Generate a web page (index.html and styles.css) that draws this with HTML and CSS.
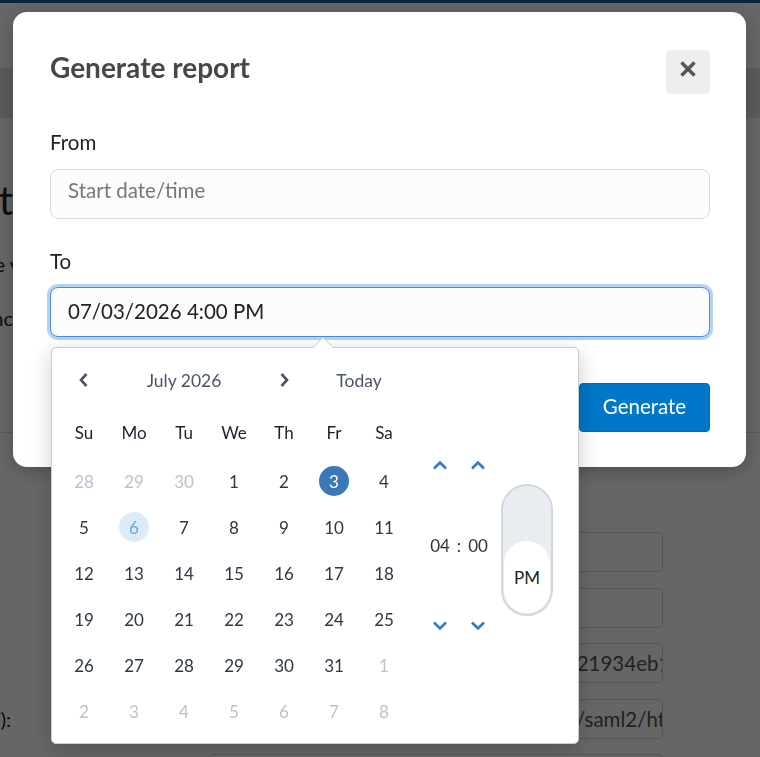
FILE: index.html
```html
<!DOCTYPE html>
<html lang="en">
<head>
    <meta charset="UTF-8">
    <meta name="viewport" content="width=device-width, initial-scale=1.0">
    <title>Generate report</title>
    <link rel="stylesheet" href="styles.css">
</head>
<body>

    <!-- page behind the dialog -->
    <div class="page">
        <div class="topbar"></div>
        <div class="header"></div>
        <div class="subnav"></div>

        <div class="intro">
            <h1 class="lead lead-title"><span>Edit client</span></h1>
            <p class="lead lead-text lead-wide"><span>Edit the v</span></p>
            <p class="lead lead-text"><span>Metadata sync</span></p>
        </div>
        <hr class="rule">

        <div class="fields">
            <div class="field-row"><label class="row-label"></label><div class="row-input"></div></div>
            <div class="field-row"><label class="row-label"></label><div class="row-input"></div></div>
            <div class="field-row"><label class="row-label"></label><div class="row-input"><span>83071562904817325064918273650421934eb1c07f</span></div></div>
            <div class="field-row"><label class="row-label"><span>Assertion consumer URL (POST):</span></label><div class="row-input"><span>https://signin.partners-university.edu.au/saml2/http-post</span></div></div>
            <div class="field-row"><label class="row-label"></label><div class="row-input"></div></div>
        </div>
    </div>

    <!-- dialog -->
    <div class="backdrop">
        <div class="modal">
            <div class="modal-head">
                <h2 class="modal-title">Generate report</h2>
                <button class="close" aria-label="Close">
                    <svg width="18" height="18" viewBox="0 0 18 18"><path d="M2.5 2.5 L15.5 15.5 M15.5 2.5 L2.5 15.5" stroke="#555" stroke-width="3.4" stroke-linecap="butt"/></svg>
                </button>
            </div>

            <label class="field-label">From</label>
            <div class="input placeholder">Start date/time</div>

            <label class="field-label field-label-to">To</label>
            <div class="input-wrap">
                <div class="input input-focus">07/03/2026 4:00 PM</div>

                <div class="picker">
                    <div class="calendar">
                        <div class="cal-head">
                            <span class="nav prev">
                                <svg width="12" height="16" viewBox="0 0 12 16"><polyline points="8.5,2 3,8 8.5,14" fill="none" stroke="#4a5568" stroke-width="2.6"/></svg>
                            </span>
                            <span class="month">July 2026</span>
                            <span class="nav next">
                                <svg width="12" height="16" viewBox="0 0 12 16"><polyline points="3.5,2 9,8 3.5,14" fill="none" stroke="#4a5568" stroke-width="2.6"/></svg>
                            </span>
                            <span class="today">Today</span>
                        </div>
                        <div class="weekdays">
                            <span>Su</span><span>Mo</span><span>Tu</span><span>We</span><span>Th</span><span>Fr</span><span>Sa</span>
                        </div>
                        <div class="days">
                            <div class="day muted"><span>28</span></div>
                            <div class="day muted"><span>29</span></div>
                            <div class="day muted"><span>30</span></div>
                            <div class="day"><span>1</span></div>
                            <div class="day"><span>2</span></div>
                            <div class="day selected"><span>3</span></div>
                            <div class="day"><span>4</span></div>

                            <div class="day"><span>5</span></div>
                            <div class="day current"><span>6</span></div>
                            <div class="day"><span>7</span></div>
                            <div class="day"><span>8</span></div>
                            <div class="day"><span>9</span></div>
                            <div class="day"><span>10</span></div>
                            <div class="day"><span>11</span></div>

                            <div class="day"><span>12</span></div>
                            <div class="day"><span>13</span></div>
                            <div class="day"><span>14</span></div>
                            <div class="day"><span>15</span></div>
                            <div class="day"><span>16</span></div>
                            <div class="day"><span>17</span></div>
                            <div class="day"><span>18</span></div>

                            <div class="day"><span>19</span></div>
                            <div class="day"><span>20</span></div>
                            <div class="day"><span>21</span></div>
                            <div class="day"><span>22</span></div>
                            <div class="day"><span>23</span></div>
                            <div class="day"><span>24</span></div>
                            <div class="day"><span>25</span></div>

                            <div class="day"><span>26</span></div>
                            <div class="day"><span>27</span></div>
                            <div class="day"><span>28</span></div>
                            <div class="day"><span>29</span></div>
                            <div class="day"><span>30</span></div>
                            <div class="day"><span>31</span></div>
                            <div class="day muted"><span>1</span></div>

                            <div class="day muted"><span>2</span></div>
                            <div class="day muted"><span>3</span></div>
                            <div class="day muted"><span>4</span></div>
                            <div class="day muted"><span>5</span></div>
                            <div class="day muted"><span>6</span></div>
                            <div class="day muted"><span>7</span></div>
                            <div class="day muted"><span>8</span></div>
                        </div>
                    </div>

                    <div class="time">
                        <div class="clock">
                            <span class="arrow up-h"><svg width="16" height="10" viewBox="0 0 16 10"><polyline points="2,8.5 8,2.5 14,8.5" fill="none" stroke="#2f7bcb" stroke-width="2.6"/></svg></span>
                            <span class="arrow up-m"><svg width="16" height="10" viewBox="0 0 16 10"><polyline points="2,8.5 8,2.5 14,8.5" fill="none" stroke="#2f7bcb" stroke-width="2.6"/></svg></span>
                            <span class="value hours">04</span>
                            <span class="value colon">:</span>
                            <span class="value minutes">00</span>
                            <span class="arrow down-h"><svg width="16" height="10" viewBox="0 0 16 10"><polyline points="2,1.5 8,7.5 14,1.5" fill="none" stroke="#2f7bcb" stroke-width="2.6"/></svg></span>
                            <span class="arrow down-m"><svg width="16" height="10" viewBox="0 0 16 10"><polyline points="2,1.5 8,7.5 14,1.5" fill="none" stroke="#2f7bcb" stroke-width="2.6"/></svg></span>
                        </div>
                        <div class="meridiem">
                            <div class="knob">PM</div>
                        </div>
                    </div>
                </div>
            </div>

            <div class="modal-foot">
                <button class="btn">Generate</button>
            </div>
        </div>
    </div>

</body>
</html>
```

FILE: styles.css
```css
* {
    box-sizing: border-box;
}
html, body {
    height: 100%;
}
body {
    margin: 0;
    font-family: Lato, "Noto Sans", sans-serif;
    background-color: white;
    color: #222;
    overflow: hidden;
}

/* background page */
.topbar {
    height: 3px;
    background-color: #1c5ca0;
}
.header {
    height: 65px;
}
.subnav {
    height: 50px;
    background-color: #e4e4e4;
}
.intro {
    padding-top: 58px;
}
.lead {
    display: flex;
    justify-content: flex-end;
    width: 13px;
    overflow: hidden;
    white-space: nowrap;
    margin: 0;
}
.lead-title {
    font-size: 40px;
    line-height: 48px;
    font-weight: normal;
}
.lead-text {
    font-size: 20px;
    line-height: 28px;
    margin-top: 26px;
}
.lead-wide {
    width: 20px;
}
.rule {
    margin: 100px 0 0;
    border: none;
    border-top: 1px solid #d8d8d8;
}
.fields {
    padding-top: 99px;
}
.field-row {
    display: grid;
    grid-template-columns: 11px 455px;
    column-gap: 197px;
    align-items: center;
    margin-bottom: 15.5px;
}
.row-label {
    display: flex;
    justify-content: flex-end;
    overflow: hidden;
    white-space: nowrap;
    font-size: 20px;
}
.row-input {
    height: 40px;
    border: 1px solid #d4d4d4;
    border-radius: 5px;
    padding-left: 11px;
    display: flex;
    align-items: center;
    overflow: hidden;
    white-space: nowrap;
    font-size: 20.5px;
    color: #555;
}

/* dialog */
.backdrop {
    position: fixed;
    inset: 0;
    background-color: rgba(0, 0, 0, 0.6);
    display: flex;
    align-items: flex-start;
    padding: 12px 0 0 13px;
}
.modal {
    width: 733px;
    background-color: white;
    border-radius: 14px;
    padding: 38px 36px 35px 37px;
    box-shadow: 0 4px 18px rgba(0, 0, 0, 0.25);
}
.modal-head {
    display: flex;
    justify-content: space-between;
    align-items: flex-start;
    height: 44px;
}
.modal-title {
    margin: 0;
    font-size: 28px;
    line-height: 34px;
    font-weight: bold;
    color: #474747;
}
.close {
    width: 44px;
    height: 44px;
    padding: 0 0 7px;
    border: none;
    border-radius: 4px;
    background-color: #eee;
    display: flex;
    align-items: center;
    justify-content: center;
}
.field-label {
    display: block;
    font-size: 20.5px;
    line-height: 24px;
    margin: 36px 0 15px;
}
.field-label-to {
    margin-top: 30px;
    margin-bottom: 14px;
}
.input {
    height: 50px;
    border: 1px solid #ddd;
    border-radius: 8px;
    background-color: #fcfcfc;
    padding: 0 17px 3px;
    display: flex;
    align-items: center;
    font-size: 20.5px;
}
.placeholder {
    padding-bottom: 9px;
    color: #777;
}
.input-wrap {
    position: relative;
}
.input-focus {
    border-color: #4a8fd8;
    box-shadow: 0 0 0 3px #b5d4f4;
    color: #222;
}
.modal-foot {
    display: flex;
    justify-content: flex-end;
    margin-top: 46px;
}
.btn {
    width: 131px;
    height: 49px;
    padding: 0 0 3px;
    border: 1px solid #006bb6;
    border-radius: 4px;
    background-color: #0077c8;
    color: white;
    font-family: inherit;
    font-size: 20.5px;
}

/* date picker */
.picker {
    position: absolute;
    top: calc(100% + 10px);
    left: 1px;
    width: 528px;
    display: flex;
    padding: 9px 0 9px 7px;
    background-color: white;
    border: 1px solid #ccc;
    border-radius: 5px;
    box-shadow: 0 6px 22px rgba(0, 0, 0, 0.2);
    z-index: 2;
}
.picker::before,
.picker::after {
    content: "";
    position: absolute;
    left: 261px;
    border: 10px solid transparent;
    border-top: none;
}
.picker::before {
    top: -11px;
    border-bottom: 10px solid #ccc;
}
.picker::after {
    top: -10px;
    border-bottom: 10px solid white;
}
.calendar {
    width: 350px;
}
.cal-head,
.weekdays,
.days {
    display: grid;
    grid-template-columns: repeat(7, 50px);
    grid-auto-rows: 46px;
    align-items: center;
    text-align: center;
    font-size: 17px;
}
.cal-head {
    color: #4a5568;
    font-size: 17.5px;
}
.nav {
    display: flex;
    justify-content: center;
}
.month {
    grid-column: 2 / 5;
}
.next {
    grid-column: 5;
}
.today {
    grid-column: 6 / 8;
}
.weekdays {
    margin-top: 6px;
    color: #1a202c;
}
.days {
    margin-top: 3px;
    color: #2d3748;
}
.day {
    display: flex;
    justify-content: center;
}
.day span {
    width: 30px;
    height: 30px;
    border-radius: 50%;
    display: flex;
    align-items: center;
    justify-content: center;
}
.muted {
    color: #b9c2cd;
}
.selected span {
    background-color: #3a78b8;
    color: white;
}
.current span {
    background-color: #dcebf8;
    color: #6aa6dc;
}

/* time */
.time {
    display: flex;
    align-items: center;
    padding-left: 16px;
}
.clock {
    display: grid;
    grid-template-columns: 30px 8px 30px;
    grid-template-rows: 24px 137px 24px;
    align-items: center;
    justify-items: center;
    font-size: 17px;
    color: #333;
}
.arrow {
    display: flex;
}
.up-h { grid-area: 1 / 1; }
.up-m { grid-area: 1 / 3; }
.hours { grid-area: 2 / 1; }
.colon { grid-area: 2 / 2; }
.minutes { grid-area: 2 / 3; }
.down-h { grid-area: 3 / 1; }
.down-m { grid-area: 3 / 3; }
.meridiem {
    width: 52px;
    height: 132px;
    margin: 9px 0 0 8px;
    padding: 0 1px 1px;
    border: 2px solid #d3d8e0;
    border-radius: 26px;
    background-color: #e9ecf1;
    display: flex;
    flex-direction: column;
    justify-content: flex-end;
}
.knob {
    height: 72px;
    border-radius: 23px;
    background-color: white;
    display: flex;
    align-items: center;
    justify-content: center;
    font-size: 17px;
    color: #222;
}
```
